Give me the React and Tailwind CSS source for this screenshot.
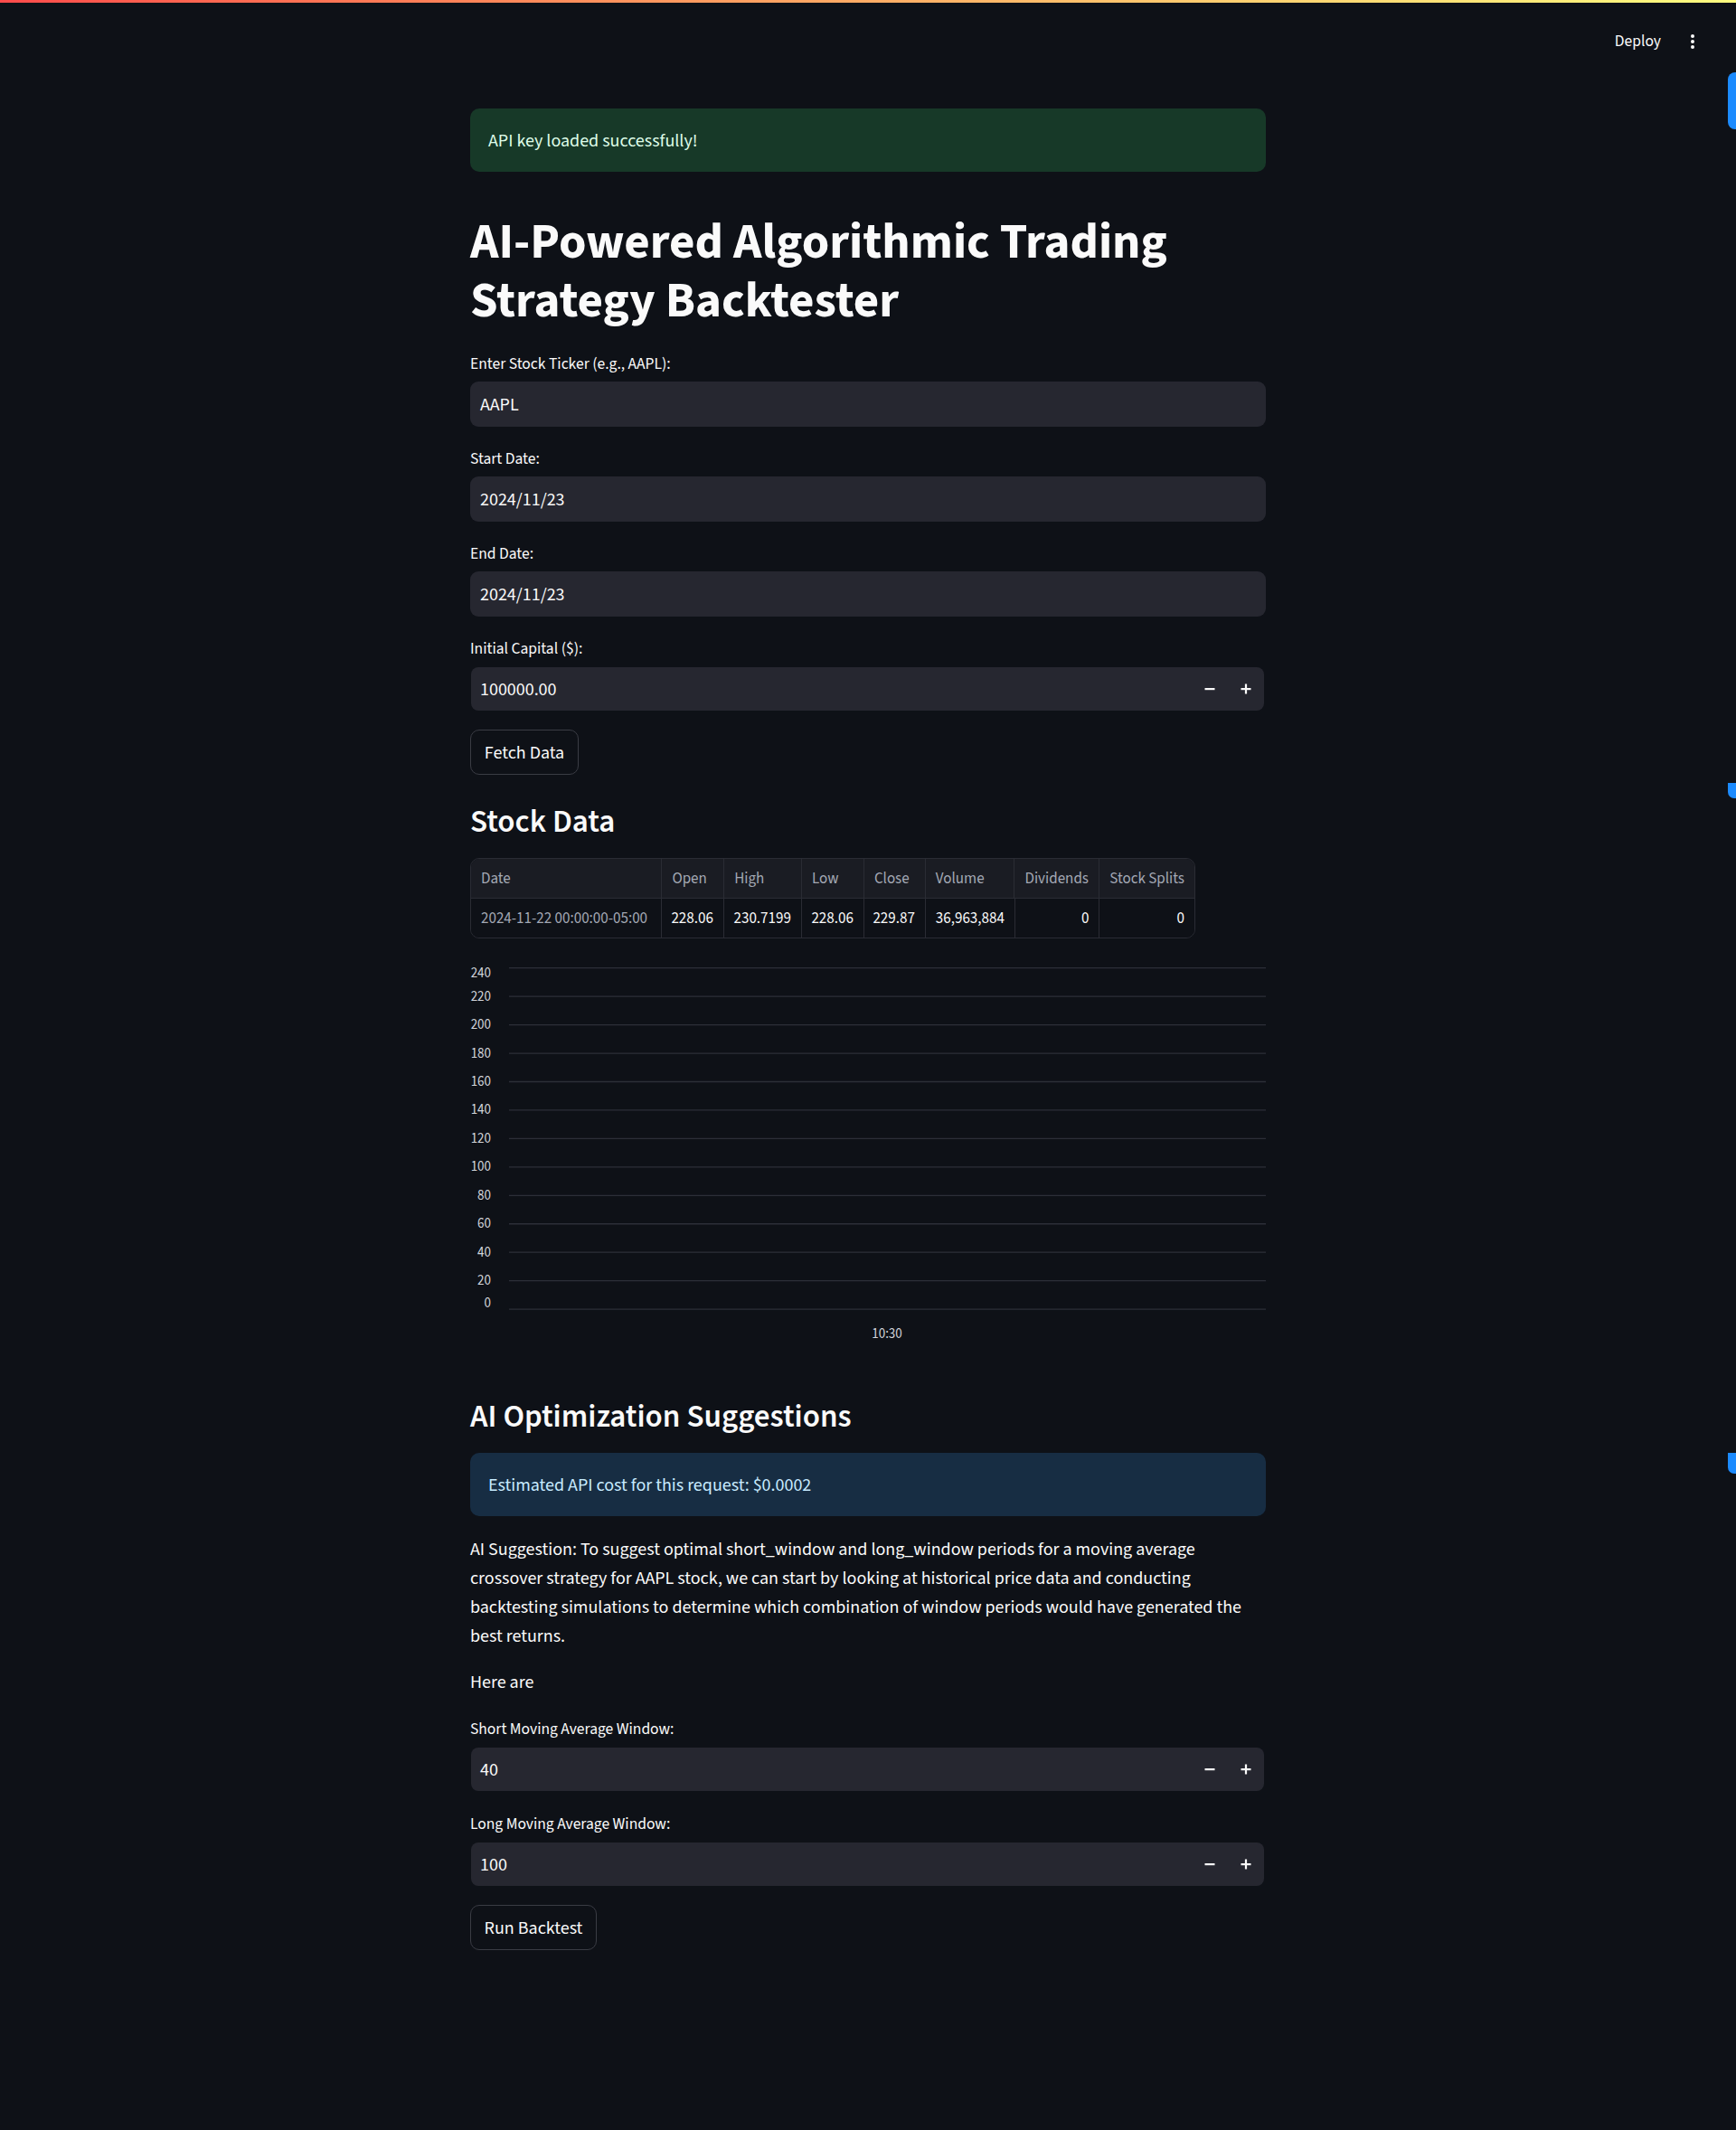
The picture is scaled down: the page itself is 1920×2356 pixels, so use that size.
import React from 'react';

const FONT = { fontFamily: '"Source Sans Pro", "Source Sans 3", Lato, "Noto Sans", sans-serif' };

const columns = [
  { key: 'date', label: 'Date', w: 'w-[211px]', align: 'text-left', muted: true },
  { key: 'open', label: 'Open', w: 'w-[69px]', align: 'text-right' },
  { key: 'high', label: 'High', w: 'w-[86px]', align: 'text-right' },
  { key: 'low', label: 'Low', w: 'w-[69px]', align: 'text-right' },
  { key: 'close', label: 'Close', w: 'w-[68px]', align: 'text-right' },
  { key: 'volume', label: 'Volume', w: 'w-[99px]', align: 'text-right' },
  { key: 'dividends', label: 'Dividends', w: 'w-[94px]', align: 'text-right' },
  { key: 'splits', label: 'Stock Splits', w: 'w-[106px]', align: 'text-right' },
];

const row = {
  date: '2024-11-22 00:00:00-05:00',
  open: '228.06',
  high: '230.7199',
  low: '228.06',
  close: '229.87',
  volume: '36,963,884',
  dividends: '0',
  splits: '0',
};

const yTicks = [240, 220, 200, 180, 160, 140, 120, 100, 80, 60, 40, 20, 0];

const Label = ({ children }) => (
  <div className="h-[30px] mb-[5px] pt-[2px] flex items-center text-[17.5px] text-[#fafafa]">{children}</div>
);

const TextInput = ({ label, value }) => (
  <div>
    <Label>{label}</Label>
    <div className="h-[50px] rounded-[9px] bg-[#262730] flex items-center pl-[11px] pt-[2px] text-[20px] text-[#fafafa]">
      {value}
    </div>
  </div>
);

const MinusIcon = () => (
  <svg width="12" height="12" viewBox="0 0 12 12"><rect x="0.5" y="5" width="11" height="2.2" fill="#fafafa" /></svg>
);

const PlusIcon = () => (
  <svg width="12" height="12" viewBox="0 0 12 12">
    <rect x="0.5" y="5" width="11" height="2.2" fill="#fafafa" />
    <rect x="4.9" y="0.5" width="2.2" height="11" fill="#fafafa" />
  </svg>
);

const NumberInput = ({ label, value }) => (
  <div>
    <Label>{label}</Label>
    <div className="h-[50px] py-px pl-px pr-[2px]">
      <div className="h-full rounded-[8px] bg-[#262730] flex items-center">
        <div className="flex-1 pl-[10px] pt-[2px] text-[20px] text-[#fafafa]">{value}</div>
        <div className="w-[40px] h-full flex items-center justify-center"><MinusIcon /></div>
        <div className="w-[40px] h-full flex items-center justify-center"><PlusIcon /></div>
      </div>
    </div>
  </div>
);

const Button = ({ children, w }) => (
  <div>
    <button className={`${w} h-[50px] pt-[2px] rounded-[10px] border border-[#3a3c44] bg-[#0e1117] text-[20px] text-[#fafafa] flex items-center justify-center`}>
      {children}
    </button>
  </div>
);

const Subheader = ({ children }) => (
  <h3 className="pt-[12px] text-[35px] leading-[40px] font-semibold text-[#fafafa]">{children}</h3>
);

const LineChartEmpty = () => {
  const top = 12.7;
  const step = 31.45;
  return (
    <svg width="880" height="457" className="block">
      {yTicks.map((t, i) => {
        const y = top + i * step;
        let ly = y;
        if (i === 0) ly = y + 6;
        if (i === yTicks.length - 1) ly = y - 7;
        return (
          <g key={t}>
            <line x1="43" x2="880" y1={y} y2={y} stroke="#2c2f38" strokeWidth="1.3" />
            <text x="23" y={ly} textAnchor="end" dominantBaseline="central" fontSize="15" fill="#d2d5db" style={FONT}>
              {t}
            </text>
          </g>
        );
      })}
      <text x="461" y="417" textAnchor="middle" dominantBaseline="central" fontSize="15" fill="#d2d5db" style={FONT}>
        10:30
      </text>
    </svg>
  );
};

const App = () => {
  return (
    <div className="relative min-h-[2356px] bg-[#0e1117] text-[#fafafa]" style={FONT}>
      {/* header */}
      <div className="h-[3px] bg-gradient-to-r from-[#ff4b4b] to-[#fffd80]" />
      <div className="h-[86px] flex items-center justify-end pr-[36px] gap-[23px]">
        <span className="text-[17.5px] text-[#fafafa]">Deploy</span>
        <svg width="24" height="24" viewBox="0 0 24 24">
          <circle cx="12" cy="6" r="2" fill="#fafafa" />
          <circle cx="12" cy="12" r="2" fill="#fafafa" />
          <circle cx="12" cy="18" r="2" fill="#fafafa" />
        </svg>
      </div>

      {/* scroll markers on the right edge */}
      <div className="absolute right-0 top-[80px] w-[9px] h-[63px] rounded-l-[8px] bg-[#1c8bfe]" />
      <div className="absolute right-0 top-[866px] w-[9px] h-[17px] rounded-bl-[7px] bg-[#1c8bfe]" />
      <div className="absolute right-0 top-[1607px] w-[9px] h-[23px] rounded-bl-[7px] bg-[#1c8bfe]" />

      <main className="w-[880px] mx-auto pt-[31px] pb-[160px] flex flex-col gap-[20px]">
        <div className="h-[70px] rounded-[10px] bg-[#173928] px-[20px] pt-[2px] flex items-center text-[20px] text-[#dffde9]">
          API key loaded successfully!
        </div>

        <h1 className="pt-[26px] pb-px text-[55px] leading-[65px] font-bold text-[#fafafa]">
          AI-Powered Algorithmic Trading
          <br />
          Strategy Backtester
        </h1>

        <TextInput label="Enter Stock Ticker (e.g., AAPL):" value="AAPL" />
        <TextInput label="Start Date:" value="2024/11/23" />
        <TextInput label="End Date:" value="2024/11/23" />
        <NumberInput label="Initial Capital ($):" value="100000.00" />
        <Button w="w-[120px]">Fetch Data</Button>

        <Subheader>Stock Data</Subheader>

        <div className="w-[802px] rounded-[10px] border border-[#2a2c34] overflow-hidden text-[17px]">
          <div className="flex h-[44px] bg-[#1a1c23] border-b border-[#2a2c34]">
            {columns.map((c, i) => (
              <div
                key={c.key}
                className={`${c.w} ${i > 0 ? 'border-l border-[#2a2c34]' : ''} px-[11px] pt-[3px] flex items-center text-[#a3a8b4] whitespace-nowrap`}
              >
                {c.label}
              </div>
            ))}
          </div>
          <div className="flex h-[43px] bg-[#0e1117]">
            {columns.map((c, i) => (
              <div
                key={c.key}
                className={`${c.w} ${i > 0 ? 'border-l border-[#2a2c34]' : ''} px-[11px] pt-[2px] flex items-center whitespace-nowrap ${c.align === 'text-right' ? 'justify-end' : 'justify-start'} ${c.muted ? 'text-[#a3a8b4]' : 'text-[#fafafa]'}`}
              >
                {row[c.key]}
              </div>
            ))}
          </div>
        </div>

        <LineChartEmpty />

        <Subheader>AI Optimization Suggestions</Subheader>

        <div className="h-[70px] rounded-[10px] bg-[#172d43] px-[20px] pt-[2px] flex items-center text-[20px] text-[#c7ebff]">
          Estimated API cost for this request: $0.0002
        </div>

        <div className="pt-px text-[20px] leading-[32px] text-[#fafafa]">
          <p className="mb-[19px] whitespace-nowrap">
            AI Suggestion: To suggest optimal short_window and long_window periods for a moving average
            <br />
            crossover strategy for AAPL stock, we can start by looking at historical price data and conducting
            <br />
            backtesting simulations to determine which combination of window periods would have generated the
            <br />
            best returns.
          </p>
          <p>Here are</p>
        </div>

        <NumberInput label="Short Moving Average Window:" value="40" />
        <NumberInput label="Long Moving Average Window:" value="100" />
        <Button w="w-[140px]">Run Backtest</Button>
      </main>
    </div>
  );
};

export default App;
